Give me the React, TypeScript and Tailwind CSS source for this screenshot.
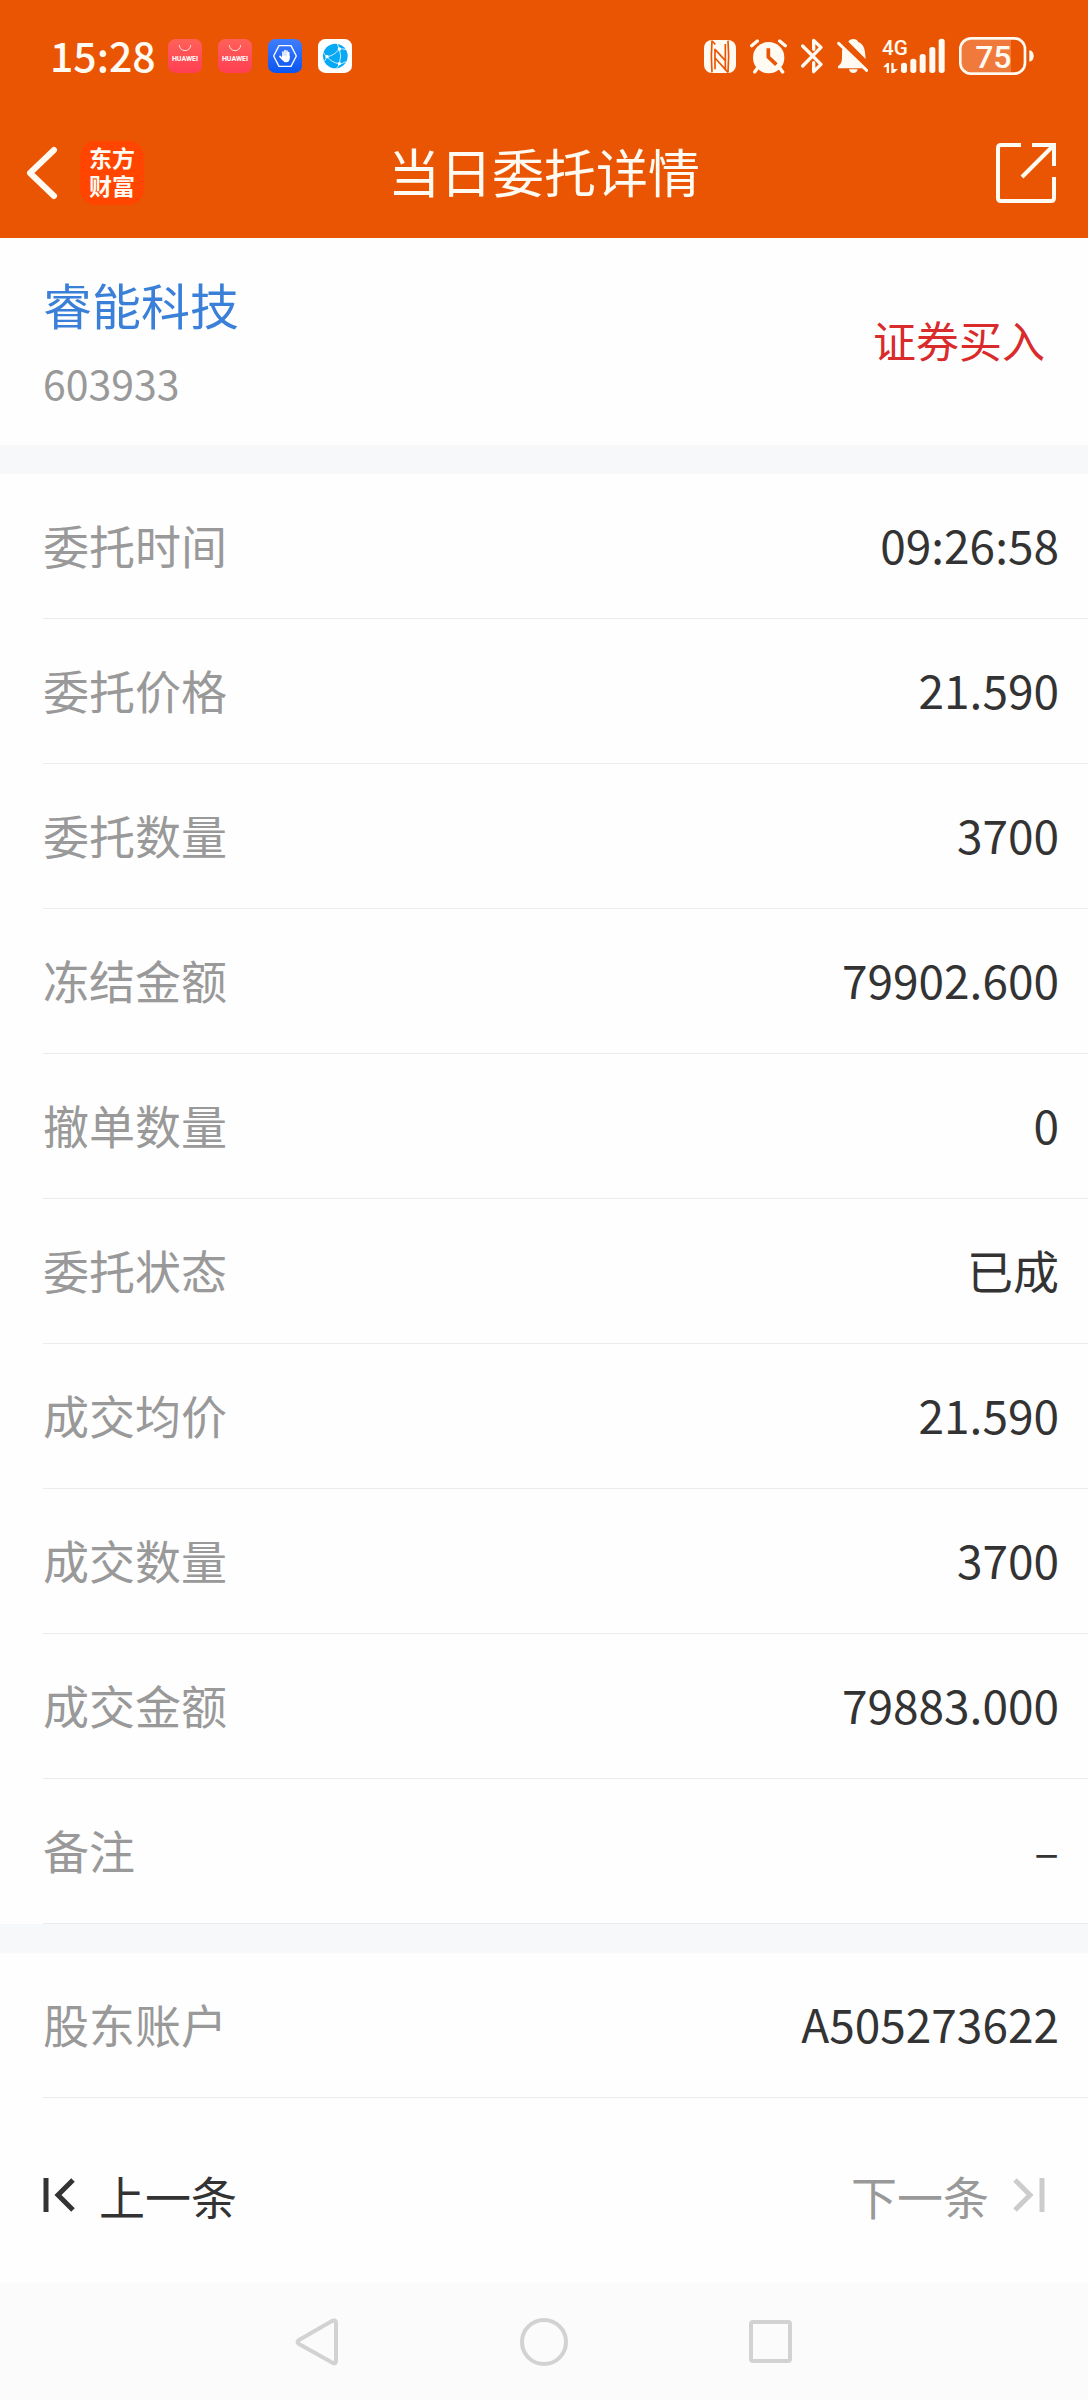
import type { ReactNode } from 'react'

type Field = { label: string; value: string }

const orderFields: Field[] = [
  { label: '委托时间', value: '09:26:58' },
  { label: '委托价格', value: '21.590' },
  { label: '委托数量', value: '3700' },
  { label: '冻结金额', value: '79902.600' },
  { label: '撤单数量', value: '0' },
  { label: '委托状态', value: '已成' },
  { label: '成交均价', value: '21.590' },
  { label: '成交数量', value: '3700' },
  { label: '成交金额', value: '79883.000' },
  { label: '备注', value: '–' },
]

const accountFields: Field[] = [{ label: '股东账户', value: 'A505273622' }]

function HuaweiIcon({ id }: { id: string }) {
  return (
    <svg className="size-[34px]" viewBox="0 0 102 102" aria-hidden="true">
      <defs>
        <linearGradient id={id} x1="0" y1="0" x2="0" y2="1">
          <stop offset="0" stopColor="#ff6159" />
          <stop offset="1" stopColor="#ff3f53" />
        </linearGradient>
      </defs>
      <rect width="102" height="102" rx="22" fill={`url(#${id})`} />
      <path d="M34 18a17 17 0 0 0 34 0" fill="none" stroke="#ffd9d2" strokeWidth="3" />
      <text x="51" y="66" textAnchor="middle" className="font-['Roboto',sans-serif]" fontSize="21" fontWeight="700" fill="#fff">
        HUAWEI
      </text>
    </svg>
  )
}

function GuardIcon() {
  return (
    <svg className="size-[34px]" viewBox="0 0 102 102" aria-hidden="true">
      <defs>
        <linearGradient id="guard" x1="0" y1="0" x2="0" y2="1">
          <stop offset="0" stopColor="#3f7dfb" />
          <stop offset="1" stopColor="#0a55f2" />
        </linearGradient>
      </defs>
      <rect width="102" height="102" rx="22" fill="url(#guard)" />
      <path d="M17 51 33 20h36l16 31-16 31H33Z" fill="none" stroke="#fff" strokeWidth="4" strokeLinejoin="round" />
      <g stroke="#fff" strokeWidth="5" strokeLinecap="round" fill="none">
        <path d="M45 56V39M51 56V35M57 56V36M62 56V41M36 52l8 9" />
      </g>
      <path d="M42 50h23v8q0 12-11 12-7 0-12-9Z" fill="#fff" />
    </svg>
  )
}

function GlobeIcon() {
  return (
    <svg className="size-[34px]" viewBox="0 0 102 102" aria-hidden="true">
      <rect width="102" height="102" rx="22" fill="#fff" />
      <circle cx="52" cy="51" r="37" fill="#08a9f4" />
      <g fill="none" stroke="#c9efff" strokeWidth="3">
        <path d="M16 40q4 9 11 13Q49 50 64 30q8-2 20 2" />
        <path d="M27 53q14 18 37 21 10 0 20-6M64 30q8 20 0 44-2 8-8 13M64 30 58 15M27 53l-8 14" />
      </g>
      <g fill="#fff">
        <circle cx="27" cy="53" r="5" />
        <circle cx="64" cy="30" r="5" />
        <circle cx="64" cy="74" r="5" />
      </g>
    </svg>
  )
}

function NfcIcon() {
  return (
    <svg className="h-[33px] w-8" viewBox="0 0 96 99" aria-hidden="true">
      <rect width="96" height="99" rx="24" fill="#fffaf2" />
      <g fill="none" stroke="#ea5504" strokeWidth="5">
        <path d="M24 2q-4 47 0 95M72 2q4 47 0 95" />
        <path d="M24 3 34 13M62 86l10 11" />
        <path d="M33 28v26l31 34V62Z" strokeLinejoin="round" />
        <path d="M33 54v34M64 12v50" />
      </g>
    </svg>
  )
}

function AlarmIcon() {
  return (
    <svg className="h-[35px] w-[37px]" viewBox="0 0 111 105" aria-hidden="true">
      <circle cx="56" cy="56" r="47" fill="#fffaf2" />
      <g fill="none" stroke="#fffaf2" strokeWidth="10" strokeLinecap="round">
        <path d="M5 20 22 6M89 6l17 14M22 88l-8 11M90 88l8 11" />
      </g>
      <path d="M55 28v26l24 23" fill="none" stroke="#ea5504" strokeWidth="11" />
    </svg>
  )
}

function BluetoothIcon() {
  return (
    <svg className="h-9 w-[22px]" viewBox="0 0 66 108" aria-hidden="true">
      <path
        d="M5 24 60 79 38 101V74M38 34V7l22 21L5 84"
        fill="none"
        stroke="#fffaf2"
        strokeWidth="10"
        strokeLinecap="round"
        strokeLinejoin="round"
      />
    </svg>
  )
}

function MutedIcon() {
  return (
    <svg className="h-[34px] w-[31px]" viewBox="0 0 93 102" aria-hidden="true">
      <g fill="#fffaf2">
        <path d="M34 8Q38 0 49 0t14 8q18 7 21 32l2 20Z" />
        <path d="M17 28 77 88H3q-2-5 3-9 8-6 9-20V40q0-7 2-12Z" />
        <path d="M36 91h26q-2 11-13 11T36 91Z" />
      </g>
      <path d="m5 13 84 81" stroke="#fffaf2" strokeWidth="9" strokeLinecap="round" />
    </svg>
  )
}

function SignalIcon() {
  return (
    <svg className="h-9 w-[63px] overflow-visible" viewBox="0 0 189 108" aria-label="4G">
      <text x="0" y="51" className="font-['Roboto',sans-serif]" fontSize="62" fontWeight="500" fill="#fffaf2">
        4G
      </text>
      <g fill="#fffaf2">
        <rect x="57" y="74" width="18" height="31" rx="8" />
        <rect x="85" y="62" width="18" height="43" rx="8" />
        <rect x="113" y="48" width="18" height="57" rx="8" />
        <rect x="142" y="27" width="18" height="78" rx="8" />
        <rect x="170" y="2" width="18" height="103" rx="8" />
        <path d="M3 88 15 75h6v30h-7V87ZM28 75h7v18h13L36 105h-8Z" />
      </g>
    </svg>
  )
}

function BatteryIcon() {
  return (
    <svg className="h-[38px] w-[75px] overflow-visible" viewBox="0 0 225 114" aria-label="75%">
      <path d="M34 8h122v98H34Q8 106 8 80V34Q8 8 34 8Z" fill="#f07a3c" />
      <rect x="4" y="4" width="194" height="106" rx="32" fill="none" stroke="#fffaf2" strokeWidth="8" />
      <path d="M211 40q13 2 13 17t-13 17Z" fill="#fffaf2" />
      <text
        x="103"
        y="92"
        textAnchor="middle"
        className="font-['Roboto',sans-serif]"
        fontSize="96"
        fontWeight="500"
        fill="#fffaf2"
      >
        75
      </text>
    </svg>
  )
}

function StatusBar() {
  return (
    <div className="flex h-28 items-center justify-between pr-[54px] pl-[50px]">
      <div className="flex items-center gap-4">
        <time className="-mr-1 pb-1 text-[41px] leading-none font-medium">15:28</time>
        <HuaweiIcon id="store-a" />
        <HuaweiIcon id="store-b" />
        <GuardIcon />
        <GlobeIcon />
      </div>
      <div className="flex items-center gap-3.5">
        <NfcIcon />
        <AlarmIcon />
        <BluetoothIcon />
        <MutedIcon />
        <SignalIcon />
        <BatteryIcon />
      </div>
    </div>
  )
}

function TitleBar() {
  return (
    <div className="grid h-[122px] grid-cols-[1fr_auto_1fr] items-center px-8">
      <div className="-ml-2 flex items-center gap-[22px]">
        <button type="button" aria-label="返回">
          <svg className="h-[54px] w-[34px]" viewBox="0 0 34 54" fill="none" stroke="#fffaf2" strokeWidth="6">
            <path d="M30 4 6 27l24 23" strokeLinecap="round" strokeLinejoin="round" />
          </svg>
        </button>
        <div className="flex size-16 flex-col items-center justify-center rounded-2xl bg-[#ff4500] pb-1 text-[23px] leading-7 font-bold">
          <span>东方</span>
          <span>财富</span>
        </div>
      </div>
      <h1 className="pb-1 text-[52px] leading-none">当日委托详情</h1>
      <button type="button" aria-label="分享" className="justify-self-end">
        <svg className="size-[60px]" viewBox="0 0 60 60" fill="none" stroke="#fffaf2" strokeWidth="4">
          <path d="M25 2H5Q2 2 2 5v50q0 3 3 3h50q3 0 3-3V34M36 2h22v21M57 3 26 34" />
        </svg>
      </button>
    </div>
  )
}

function FieldList({ fields }: { fields: Field[] }) {
  return (
    <dl>
      {fields.map((field) => (
        <div
          key={field.label}
          className="ml-[43px] flex h-[145px] items-center justify-between border-b border-[#ebecee] pr-[29px] pb-1 text-[46px] leading-none"
        >
          <dt className="text-[#999999]">{field.label}</dt>
          <dd className="text-[#333333]">{field.value}</dd>
        </div>
      ))}
    </dl>
  )
}

function NavButton({ label, children }: { label: string; children: ReactNode }) {
  return (
    <button type="button" aria-label={label} className="flex items-center justify-center">
      <svg className="size-12" viewBox="0 0 48 48" fill="none" stroke="#d2d2d2" strokeWidth="4">
        {children}
      </svg>
    </button>
  )
}

export default function App() {
  return (
    <div className="flex min-h-screen flex-col bg-[#fefefe] font-['Noto_Sans_CJK_SC','Noto_Sans',sans-serif]">
      <header className="bg-[#ea5504] pb-1 text-[#fffaf2]">
        <StatusBar />
        <TitleBar />
      </header>

      <main>
        <section className="flex h-[207px] items-center justify-between px-[43px] pb-1">
          <div className="flex flex-col gap-3">
            <a href="#603933" className="text-[49px] leading-[72px] text-[#3a80d8]">
              睿能科技
            </a>
            <span className="text-[41px] leading-[60px] text-[#999999]">603933</span>
          </div>
          <span className="text-[43px] leading-none text-[#d92b2b]">证券买入</span>
        </section>

        <div className="h-[29px] bg-[#f6f8fa]" />
        <FieldList fields={orderFields} />
        <div className="h-[29px] bg-[#f6f8fa]" />
        <FieldList fields={accountFields} />
      </main>

      <div className="flex h-[185px] items-center justify-between px-[43px] pt-2 text-[46px] leading-none">
        <button type="button" className="flex items-center gap-6 text-[#333333]">
          <svg className="h-[34px] w-8" viewBox="0 0 32 34" fill="none" stroke="#333333" strokeWidth="5">
            <path d="M3 0v34M30 2 15 17l15 15" />
          </svg>
          上一条
        </button>
        <button type="button" disabled className="flex items-center gap-6 text-[#999999]">
          下一条
          <svg className="h-[34px] w-8" viewBox="0 0 32 34" fill="none" stroke="#cccccc" strokeWidth="5">
            <path d="M29 0v34M2 2l15 15L2 32" />
          </svg>
        </button>
      </div>

      <nav className="grid grow grid-cols-3 bg-[#fbfbfb] px-[204px]">
        <NavButton label="后退">
          <path d="M41 2.500Q43 2.500 43 5v38q0 3-3 2L6 26q-3-2 0-4L39 3q1-.5 2-.5Z" strokeLinejoin="round" />
        </NavButton>
        <NavButton label="主屏幕">
          <circle cx="24" cy="24" r="22" />
        </NavButton>
        <NavButton label="最近任务">
          <rect x="4" y="4" width="39" height="39" rx="2" />
        </NavButton>
      </nav>
    </div>
  )
}
